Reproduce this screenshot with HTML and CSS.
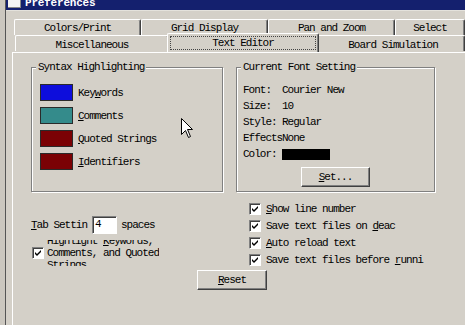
FILE: index.html
```html
<!DOCTYPE html>
<html lang="en">
<head>
    <meta charset="UTF-8">
    <title>Preferences</title>
    <link rel="stylesheet" href="styles.css">
</head>
<body>
    <div class="window">
        <div class="titlebar">
            <span class="title-icon"></span>
            <span class="title-text">Preferences</span>
        </div>

        <div class="tabs">
            <div class="tab-row row-back">
                <div class="tab tab-w127">Colors/Print</div>
                <div class="tab tab-w127">Grid Display</div>
                <div class="tab tab-w127">Pan and Zoom</div>
                <div class="tab tab-last">Select</div>
            </div>
            <div class="tab-row row-front">
                <div class="tab tab-misc">Miscellaneous</div>
                <div class="tab tab-selected"><span class="focus">Text Editor</span></div>
                <div class="tab tab-last">Board Simulation</div>
            </div>
        </div>

        <div class="panel">
            <div class="groups">
                <div class="group group-syntax">
                    <div class="group-title">Syntax Highlighting</div>
                    <div class="swatch-list">
                        <div class="swatch-row"><span class="swatch swatch-blue"></span><span>Key<u>w</u>ords</span></div>
                        <div class="swatch-row"><span class="swatch swatch-teal"></span><span><u>C</u>omments</span></div>
                        <div class="swatch-row"><span class="swatch swatch-red"></span><span><u>Q</u>uoted Strings</span></div>
                        <div class="swatch-row"><span class="swatch swatch-red"></span><span><u>I</u>dentifiers</span></div>
                    </div>
                </div>

                <div class="group group-font">
                    <div class="group-title">Current Font Setting</div>
                    <div class="font-rows">
                        <div class="font-row"><span class="font-label">Font:</span><span>Courier New</span></div>
                        <div class="font-row"><span class="font-label">Size:</span><span>10</span></div>
                        <div class="font-row"><span class="font-label">Style:</span><span>Regular</span></div>
                        <div class="font-row"><span class="font-label">Effects</span><span>None</span></div>
                        <div class="font-row"><span class="font-label">Color:</span><span class="color-box"></span></div>
                    </div>
                    <div class="center">
                        <button class="btn btn-set"><u>S</u>et...</button>
                    </div>
                </div>
            </div>

            <div class="options">
                <div class="options-left">
                    <div class="tab-setting">
                        <span class="tab-label"><u>T</u>ab Settin</span>
                        <span class="text-input">4</span>
                        <span>spaces</span>
                    </div>
                    <div class="check-row check-multi">
                        <span class="checkbox checked"><svg viewBox="0 0 8 8"><path d="M1 3 L3 5 L7 1 L7 3 L3 7 L1 5 Z" fill="#000"/></svg></span>
                        <div class="multi-label">
                            <div class="multi-text">Highlight <u>K</u>eywords,<br>Comments, and Quoted<br>Strings</div>
                        </div>
                    </div>
                </div>

                <div class="options-right">
                    <div class="check-row">
                        <span class="checkbox checked"><svg viewBox="0 0 8 8"><path d="M1 3 L3 5 L7 1 L7 3 L3 7 L1 5 Z" fill="#000"/></svg></span>
                        <span><u>S</u>how line number</span>
                    </div>
                    <div class="check-row">
                        <span class="checkbox checked"><svg viewBox="0 0 8 8"><path d="M1 3 L3 5 L7 1 L7 3 L3 7 L1 5 Z" fill="#000"/></svg></span>
                        <span>Save text files on <u>d</u>eac</span>
                    </div>
                    <div class="check-row">
                        <span class="checkbox checked"><svg viewBox="0 0 8 8"><path d="M1 3 L3 5 L7 1 L7 3 L3 7 L1 5 Z" fill="#000"/></svg></span>
                        <span><u>A</u>uto reload text</span>
                    </div>
                    <div class="check-row">
                        <span class="checkbox checked"><svg viewBox="0 0 8 8"><path d="M1 3 L3 5 L7 1 L7 3 L3 7 L1 5 Z" fill="#000"/></svg></span>
                        <span>Save text files before <u>r</u>unni</span>
                    </div>
                </div>
            </div>

            <div class="actions">
                <button class="btn btn-reset"><u>R</u>eset</button>
            </div>
        </div>

        <!-- mouse pointer over the dialog -->
        <svg class="cursor" width="13" height="21" viewBox="0 0 13 21">
            <path d="M0.5 0.5 L0.5 16.5 L4.5 12.5 L7.5 19.5 L9.5 18.5 L6.5 11.5 L11.5 11.5 Z" fill="#fff" stroke="#000" stroke-width="1"/>
        </svg>
    </div>
</body>
</html>
```

FILE: styles.css
```css
html, body {
    margin: 0;
    height: 325px;
    overflow: hidden;
}

body {
    background-color: #cbc7bf;
    font-family: "Liberation Mono", monospace;
    font-size: 11px;
    letter-spacing: -1px;
    color: #000;
}

u {
    text-decoration: underline;
    text-underline-offset: 1px;
}

.window {
    position: relative;
    margin-left: 5px;
    height: 325px;
    overflow: hidden;
    border-left: 1px solid #555;
    background-color: #d4d0c8;
}

/* title bar, cut off at the top of the shot */
.titlebar {
    height: 10px;
    background-color: #14206e;
    border-bottom: 1px solid #e4e2dc;
    overflow: hidden;
    display: flex;
    align-items: flex-start;
}

.title-icon {
    width: 12px;
    height: 7px;
    margin-left: 2px;
    background-color: #f4f4f4;
    border-right: 1px solid #888;
    border-bottom: 1px solid #888;
}

.title-text {
    margin-left: 4px;
    margin-top: -5px;
    font-size: 11px;
    font-weight: bold;
    letter-spacing: -0.2px;
    line-height: 16px;
    color: #fff;
}

/* tabs */
.tabs {
    margin-top: 8px;
    margin-left: 8px;
}

.tab-row {
    display: flex;
}

.tab {
    box-sizing: border-box;
    height: 16px;
    line-height: 17px;
    text-align: center;
    white-space: nowrap;
    overflow: hidden;
    background-color: #d4d0c8;
    border-top: 1px solid #fff;
    border-left: 1px solid #fff;
    border-right: 1px solid #404040;
    box-shadow: inset -1px 0 0 #808080;
    border-top-left-radius: 2px;
    border-top-right-radius: 2px;
}

.tab-w127 {
    width: 127px;
}

.tab-last {
    flex: 1;
}

.row-front {
    margin-left: 1px;
}

.row-front .tab {
    line-height: 18px;
}

.tab-misc {
    width: 154px;
}

.row-front .tab-selected {
    position: relative;
    z-index: 2;
    width: 152px;
    height: 19px;
    margin: -2px -2px 0 -2px;
    padding: 2px 2px 0 2px;
    line-height: 12px;
}

.tab-selected + .tab {
    padding-left: 4px;
}

.focus {
    display: block;
    border: 1px dotted #444;
    height: 12px;
}

.panel {
    margin-left: 6px;
    border-top: 1px solid #fff;
    border-left: 1px solid #fff;
    padding: 14px 0 0 18px;
    height: 274px;
}

/* group boxes */
.groups {
    display: flex;
    gap: 13px;
}

.group {
    box-sizing: border-box;
    height: 125px;
    border: 1px solid #808080;
    box-shadow: 1px 1px 0 #fff, inset 1px 1px 0 #fff;
}

.group-syntax {
    width: 192px;
}

.group-font {
    width: 199px;
}

.group-title {
    width: fit-content;
    margin: -7px 0 0 4px;
    padding: 0 2px;
    line-height: 12px;
    background-color: #d4d0c8;
}

.swatch-list {
    display: flex;
    flex-direction: column;
    gap: 6px;
    margin: 11px 0 0 8px;
}

.swatch-row {
    display: flex;
    align-items: center;
    gap: 5px;
    height: 17px;
}

.swatch {
    box-sizing: border-box;
    width: 33px;
    height: 17px;
    border: 1px solid #2a2a2a;
}

.swatch-blue {
    background-color: #0d0ddc;
}

.swatch-teal {
    background-color: #348b8b;
}

.swatch-red {
    background-color: #7b0205;
}

.font-rows {
    margin: 9px 0 0 6px;
}

.font-row {
    display: flex;
    align-items: center;
    height: 16px;
}

.font-label {
    width: 39px;
}

.color-box {
    width: 48px;
    height: 11px;
    background-color: #000;
}

.center {
    display: flex;
    justify-content: center;
    margin-top: 5px;
}

.btn {
    box-sizing: border-box;
    height: 20px;
    padding: 0;
    font-family: inherit;
    font-size: inherit;
    letter-spacing: inherit;
    color: #000;
    background-color: #d4d0c8;
    border: 1px solid;
    border-color: #fff #404040 #404040 #fff;
    box-shadow: inset -1px -1px 0 #808080;
}

.btn-set {
    width: 69px;
}

.btn-reset {
    width: 70px;
}

/* options under the groups */
.options {
    display: flex;
    margin-top: 8px;
}

.options-left {
    width: 218px;
    flex-shrink: 0;
}

.tab-setting {
    display: flex;
    align-items: center;
    margin-top: 16px;
    height: 18px;
    white-space: nowrap;
}

.tab-label {
    flex-shrink: 0;
    width: 57px;
    margin-right: 4px;
}

.text-input {
    box-sizing: border-box;
    flex-shrink: 0;
    width: 25px;
    height: 18px;
    line-height: 14px;
    padding-left: 2px;
    margin-right: 4px;
    background-color: #fff;
    border: 1px solid;
    border-color: #808080 #fff #fff #808080;
    box-shadow: inset 1px 1px 0 #404040;
}

.check-row {
    display: flex;
    align-items: center;
    gap: 5px;
    height: 17px;
    white-space: nowrap;
}

.check-multi {
    height: 26px;
    margin-top: 6px;
    margin-left: 1px;
    gap: 3px;
}

.checkbox {
    box-sizing: border-box;
    flex-shrink: 0;
    width: 12px;
    height: 12px;
    background-color: #fff;
    border: 1px solid;
    border-color: #808080 #fff #fff #808080;
    box-shadow: inset 1px 1px 0 #404040;
    display: flex;
    align-items: center;
    justify-content: center;
}

.checkbox svg {
    width: 8px;
    height: 8px;
}

.multi-label {
    height: 26px;
    overflow: hidden;
}

.multi-text {
    margin-top: -5px;
    line-height: 12px;
}

.actions {
    margin: 2px 0 0 166px;
}

.cursor {
    position: absolute;
    left: 175px;
    top: 118px;
}
```
